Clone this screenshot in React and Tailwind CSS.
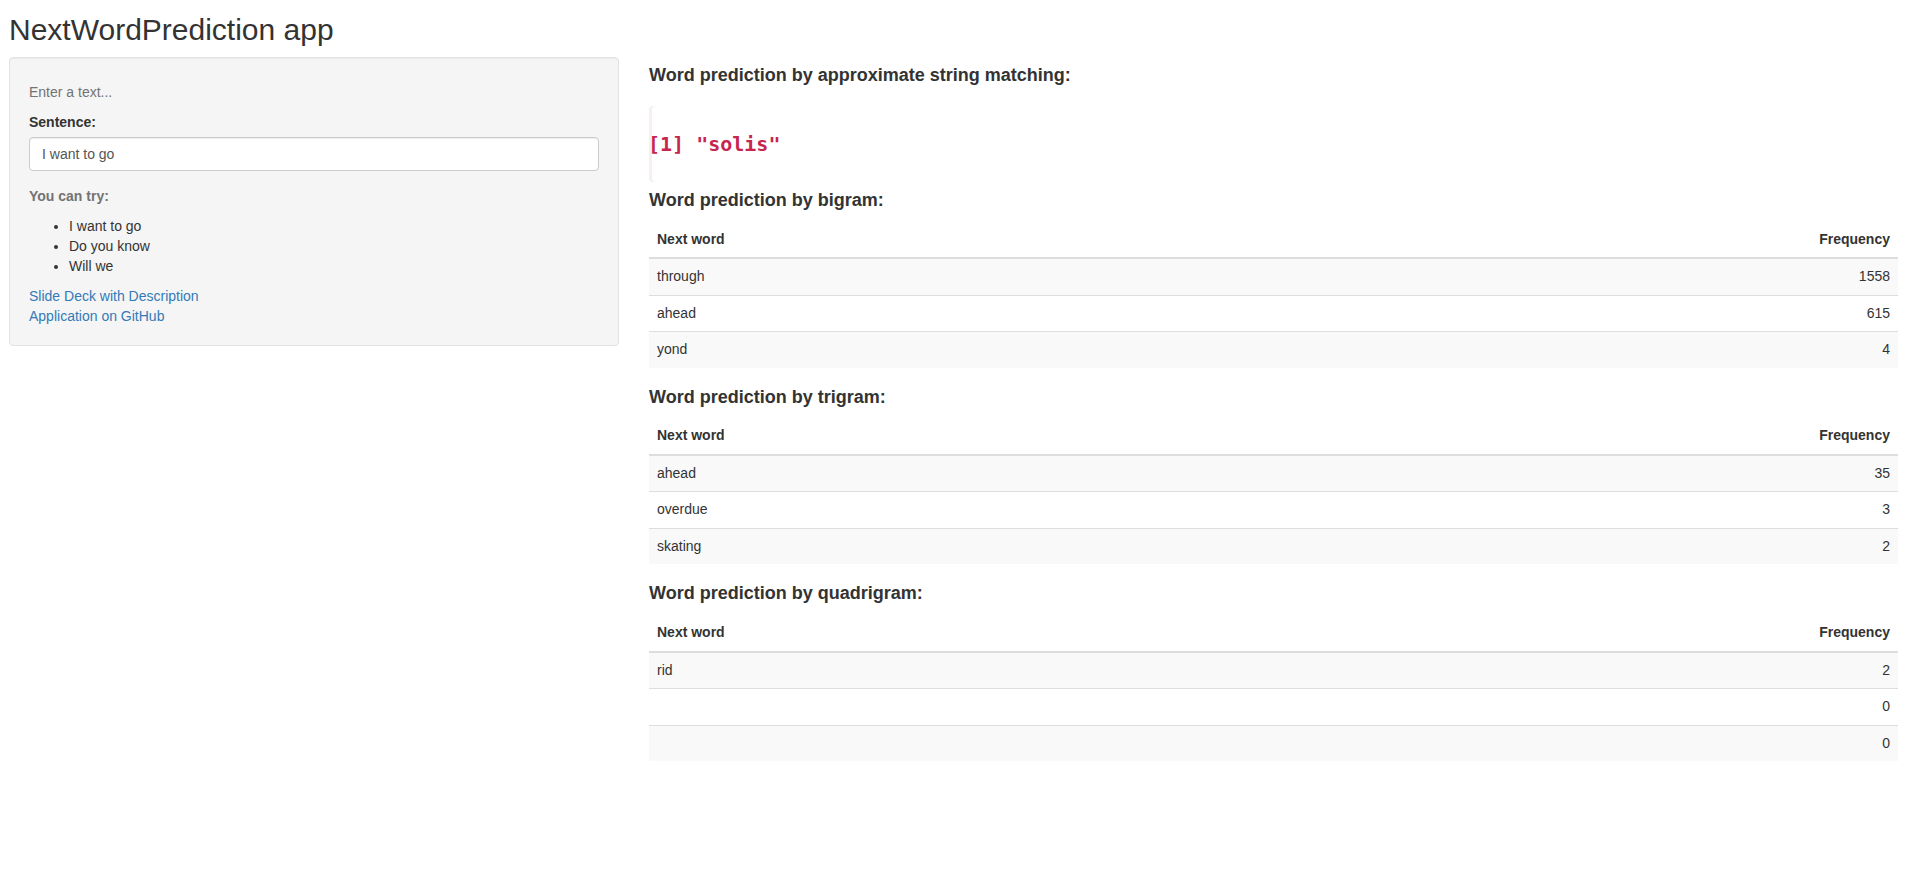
import React from "react";

function FreqTable({ rows }) {
  return (
    <table className="w-full mb-[20px] border-collapse">
      <thead>
        <tr>
          <th className="text-left font-bold px-[8px] py-[8px] leading-[19.5px] border-b-2 border-[#ddd] align-bottom">Next word</th>
          <th className="text-right font-bold px-[8px] py-[8px] leading-[19.5px] border-b-2 border-[#ddd] align-bottom">Frequency</th>
        </tr>
      </thead>
      <tbody>
        {rows.map((r, i) => (
          <tr key={i} className={i % 2 === 0 ? "bg-[#f9f9f9]" : "bg-white"}>
            <td className={"text-left px-[8px] py-[8px] leading-[19.5px] " + (i === 0 ? "" : "border-t border-[#ddd]")}>{r[0]}</td>
            <td className={"text-right px-[8px] py-[8px] leading-[19.5px] " + (i === 0 ? "" : "border-t border-[#ddd]")}>{r[1]}</td>
          </tr>
        ))}
      </tbody>
    </table>
  );
}

export default function App() {
  return (
    <div className="font-['Liberation_Sans',Arial,sans-serif] text-[14px] leading-[20px] text-[#333] bg-white min-h-screen">
      <h2 className="pl-[9px] pt-[13px] mb-[11px] text-[30px] leading-[33px] font-normal">NextWordPrediction app</h2>
      <div className="flex items-start pl-[9px] pr-[16px] gap-[30px]">
        <div className="w-[610px] shrink-0 bg-[#f5f5f5] border border-[#e3e3e3] rounded-[4px] p-[19px] shadow-[inset_0_1px_1px_rgba(0,0,0,0.05)]">
          <span className="block mt-[5px] mb-[10px] text-[#737373]">Enter a text...</span>
          <label className="block font-bold mb-[5px]">Sentence:</label>
          <input
            type="text"
            readOnly
            value="I want to go"
            className="block w-full h-[34px] px-[12px] py-[6px] border border-[#ccc] rounded-[4px] bg-white text-[#555] text-[14px] leading-[20px] shadow-[inset_0_1px_1px_rgba(0,0,0,0.075)] mb-[15px] outline-none"
          />
          <div className="font-bold text-[#737373]">You can try:</div>
          <ul className="list-disc pl-[40px] mt-[10px] mb-[10px]">
            <li>I want to go</li>
            <li>Do you know</li>
            <li>Will we</li>
          </ul>
          <a href="#" className="block text-[#337ab7]">Slide Deck with Description</a>
          <a href="#" className="block text-[#337ab7]">Application on GitHub</a>
        </div>
        <div className="flex-1 min-w-0">
          <h4 className="mt-[9px] text-[18px] leading-[19.8px] font-bold">Word prediction by approximate string matching:</h4>
          <div className="mt-[20px] h-[76px] flex items-center pt-[1px] rounded-[4px] shadow-[inset_3px_0_0_#f7eff2]">
            <span className="font-['DejaVu_Sans_Mono',monospace] font-bold text-[20px] text-[#c7254e] whitespace-pre -ml-[1px]">[1] "solis"</span>
          </div>
          <h4 className="mt-[9px] mb-[11px] text-[18px] leading-[19.8px] font-bold">Word prediction by bigram:</h4>
          <FreqTable rows={[["through", "1558"], ["ahead", "615"], ["yond", "4"]]} />
          <h4 className="mb-[11px] text-[18px] leading-[19.8px] font-bold">Word prediction by trigram:</h4>
          <FreqTable rows={[["ahead", "35"], ["overdue", "3"], ["skating", "2"]]} />
          <h4 className="mb-[11px] text-[18px] leading-[19.8px] font-bold">Word prediction by quadrigram:</h4>
          <FreqTable rows={[["rid", "2"], ["", "0"], ["", "0"]]} />
        </div>
      </div>
    </div>
  );
}
